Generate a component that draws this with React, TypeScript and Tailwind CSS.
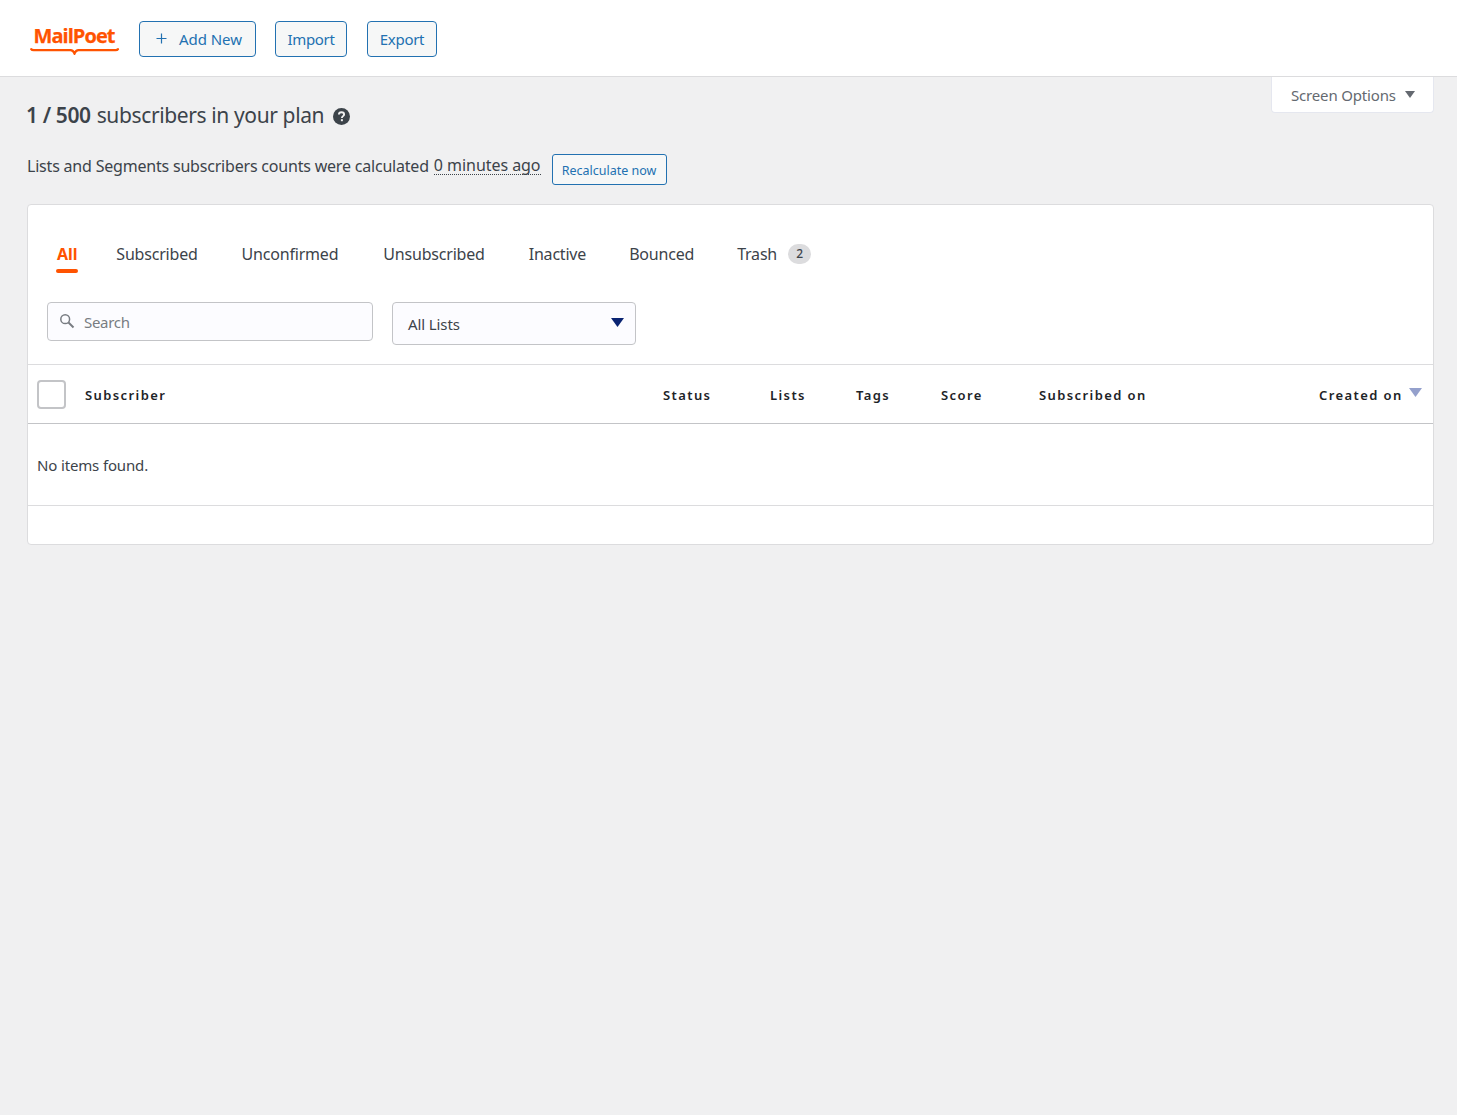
const font = "font-['Noto_Sans','Open_Sans',sans-serif]";

function HeaderButton({ children, className = "" }: { children: React.ReactNode; className?: string }) {
  return (
    <button
      type="button"
      className={`flex h-[36px] items-center rounded-[4px] border border-[#2271b1] bg-[#f6f7f7] pt-[1px] text-[15px] tracking-[-0.3px] text-[#2271b1] ${className}`}
    >
      {children}
    </button>
  );
}

function Logo() {
  return (
    <div className="flex w-[90px] flex-col items-center pt-[2px]">
      <span className="-ml-[2px] font-['Open_Sans',sans-serif] text-[20px] leading-[22px] font-bold tracking-[-0.95px] text-[#ff5301] [-webkit-text-stroke:0.25px_#ff5301]">
        MailPoet
      </span>
      <svg width="90" height="7" viewBox="0 0 90 7" className="mt-[1px]">
        <path d="M1.2 1.2C1.7 2 2.2 2.2 3.7 2.2H40.5C42 2.2 43.5 3 44.5 5.5C45.5 3 47 2.2 48.5 2.2H85.5C87 2.2 87.5 2 88 1.2" fill="none" stroke="#ff5301" strokeWidth="2.2" strokeLinecap="round" />
      </svg>
    </div>
  );
}

function Tab({ label, className = "" }: { label: string; className?: string }) {
  return <span className={`text-[16px] tracking-[-0.2px] text-[#3c434a] ${className}`}>{label}</span>;
}

function Th({ children, className = "" }: { children: React.ReactNode; className?: string }) {
  return <span className={`shrink-0 pt-[4px] text-[13px] font-semibold tracking-[1.4px] text-[#1d2327] ${className}`}>{children}</span>;
}

export default function App() {
  return (
    <div className={`${font} relative min-h-[1115px] bg-[#f0f0f1] text-[#3c434a]`}>
      <header className="flex h-[77px] items-center border-b border-[#dcdcde] bg-white pt-[1px] pl-[30px]">
        <Logo />
        <HeaderButton className="ml-[19px] w-[117px] pl-[14px]">
          <svg width="15" height="15" viewBox="0 0 15 15" className="mb-[1px]">
            <path d="M7.5 2.5V12.5M2.5 7.5H12.5" fill="none" stroke="#2271b1" strokeWidth="1.2" />
          </svg>
          <span className="ml-[10px] tracking-[-0.05px]">Add New</span>
        </HeaderButton>
        <HeaderButton className="ml-[19px] w-[72px] justify-center">Import</HeaderButton>
        <HeaderButton className="ml-[20px] w-[70px] justify-center">Export</HeaderButton>
      </header>

      <button
        type="button"
        className="absolute top-[77px] right-[23px] flex h-[36px] w-[163px] items-center rounded-b-[4px] border border-t-0 border-[#e5e7ef] bg-white pt-[1px] pl-[19px] text-[15px] tracking-[-0.17px] text-[#646970]"
      >
        Screen Options
        <svg width="10" height="7" viewBox="0 0 10 7" className="mb-[1px] ml-[9px]">
          <path d="M0 0H10L5 7Z" fill="#646970" />
        </svg>
      </button>

      <main className="pr-[23px] pl-[27px]">
        <div className="mt-[24px] -ml-[1px] flex h-[30px] items-center text-[21px] tracking-[-0.38px]">
          <span className="font-semibold">1 / 500</span>
          <span className="ml-[6px]">subscribers in your plan</span>
          <svg width="17" height="17" viewBox="0 0 17 17" className="ml-[9px]">
            <circle cx="8.5" cy="8.5" r="8.5" fill="#3c434a" />
            <path d="M5.9 6.6C5.9 5.1 7 4.2 8.5 4.2C10 4.2 11.1 5.1 11.1 6.4C11.1 8.1 8.9 8.2 8.9 10" fill="none" stroke="#f0f0f1" strokeWidth="1.9" />
            <rect x="7.9" y="11.2" width="2" height="2" fill="#f0f0f1" />
          </svg>
        </div>

        <div className="mt-[23px] flex h-[31px] items-center text-[16px] tracking-[-0.2px]">
          <span className="mb-[8px]">Lists and Segments subscribers counts were calculated</span>
          <span className="mb-[8px] ml-[5px] border-b border-dotted border-[#3c434a] leading-[18px] tracking-[-0.05px]">0 minutes ago</span>
          <button
            type="button"
            className="ml-[11px] h-[31px] w-[115px] rounded-[3px] border border-[#2271b1] bg-[#f6f7f7] pt-[3px] text-[12.5px] tracking-[0px] text-[#2271b1]"
          >
            Recalculate now
          </button>
        </div>

        <section className="mt-[19px] h-[341px] rounded-[4px] border border-[#dcdcde] bg-white">
          <nav className="flex h-[97px] items-center pl-[29px]">
            <div className="relative">
              <span className="text-[16px] font-bold tracking-[-0.1px] text-[#ff5301]">All</span>
              <span className="absolute top-[27px] -left-[1px] h-[4px] w-[22px] rounded-[2px] bg-[#ff5301]" />
            </div>
            <Tab label="Subscribed" className="ml-[39px]" />
            <Tab label="Unconfirmed" className="ml-[44px]" />
            <Tab label="Unsubscribed" className="ml-[45px]" />
            <Tab label="Inactive" className="ml-[44px]" />
            <Tab label="Bounced" className="ml-[43px]" />
            <Tab label="Trash" className="ml-[43px]" />
            <span className="ml-[11px] flex h-[20px] w-[23px] items-center justify-center rounded-full bg-[#dcdcde] text-[12px] font-medium">2</span>
          </nav>

          <div className="flex h-[62px] items-start pl-[19px]">
            <div className="flex h-[39px] w-[326px] items-center rounded-[4px] border border-[#c3c4c7] bg-[#fcfcff] pl-[11px]">
              <svg width="16" height="16" viewBox="0 0 16 16" className="mb-[2px]">
                <circle cx="6.2" cy="6.2" r="4.4" fill="none" stroke="#787c82" strokeWidth="1.5" />
                <path d="M9.5 9.5L14.5 14.5" stroke="#787c82" strokeWidth="2" />
              </svg>
              <span className="ml-[9px] pt-[1px] text-[15px] tracking-[-0.3px] text-[#787c82]">Search</span>
            </div>
            <div className="ml-[19px] flex h-[43px] w-[244px] items-center justify-between rounded-[4px] border border-[#c3c4c7] bg-[#fcfcff] pr-[11px] pl-[15px]">
              <span className="pt-[2px] text-[15px] tracking-[-0.1px]">All Lists</span>
              <svg width="13" height="9" viewBox="0 0 13 9" className="mb-[2px]">
                <path d="M0 0H13L6.5 9Z" fill="#0a2472" />
              </svg>
            </div>
          </div>

          <div className="flex h-[60px] items-center border-y border-t-[#dcdcde] border-b-[#c3c4c7] pl-[9px]">
            <span className="h-[29px] w-[29px] shrink-0 rounded-[4px] border-2 border-[#c3c4c7] bg-white" />
            <Th className="ml-[19px] w-[578px]">Subscriber</Th>
            <Th className="w-[107px]">Status</Th>
            <Th className="w-[86px]">Lists</Th>
            <Th className="w-[85px]">Tags</Th>
            <Th className="w-[98px]">Score</Th>
            <Th className="w-[280px]">Subscribed on</Th>
            <Th>Created on</Th>
            <svg width="13" height="9" viewBox="0 0 13 9" className="mb-[3px] ml-[6px] shrink-0">
              <path d="M0 0H13L6.5 9Z" fill="#94a0cc" />
            </svg>
          </div>

          <div className="flex h-[82px] items-center border-b border-[#dcdcde] pt-[1px] pl-[9px] text-[15px] tracking-[-0.15px]">
            No items found.
          </div>
        </section>
      </main>
    </div>
  );
}
